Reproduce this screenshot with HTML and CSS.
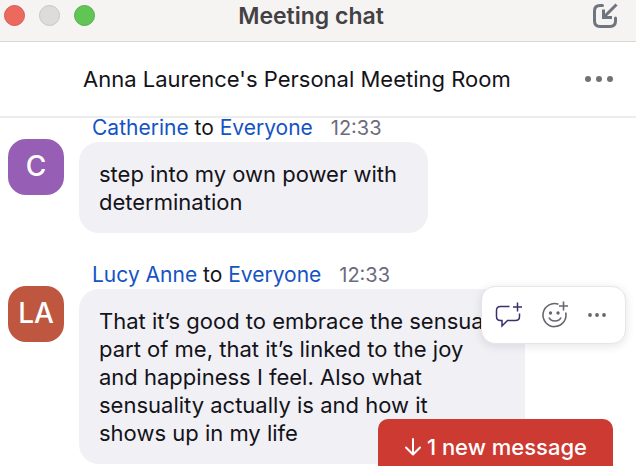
FILE: index.html
```html
<!DOCTYPE html>
<html lang="en">
<head>
  <meta charset="UTF-8">
  <meta name="viewport" content="width=device-width, initial-scale=1.0">
  <title>Meeting chat</title>
  <link rel="stylesheet" href="styles.css">
</head>
<body>
  <div class="window">
    <header class="titlebar">
      <div class="lights">
        <button class="light close" aria-label="Close"></button>
        <button class="light minimize" aria-label="Minimize" disabled></button>
        <button class="light expand" aria-label="Zoom"></button>
      </div>
      <h1>Meeting chat</h1>
      <button class="icon-btn dock" aria-label="Merge to meeting window">
        <svg width="26" height="26" viewBox="0 0 26 26" fill="none" stroke="#6f757e" stroke-width="3">
          <path d="M10.500 2.500H8C4.500 2.500 2.500 4.500 2.500 8v10c0 3.500 2 5.500 5.500 5.500h10c3.500 0 5.500-2 5.500-5.500v-3" stroke-linecap="round"/>
          <path d="M24.500 1.500L12.500 13.500M11.500 6.500v8h8.500"/>
        </svg>
      </button>
    </header>

    <div class="room">
      <h2>Anna Laurence's Personal Meeting Room</h2>
      <button class="icon-btn more" aria-label="More options">
        <svg width="30" height="8" viewBox="0 0 30 8" fill="#717176">
          <circle cx="4" cy="4" r="3"/>
          <circle cx="15" cy="4" r="3"/>
          <circle cx="26" cy="4" r="3"/>
        </svg>
      </button>
    </div>

    <main class="chat">
      <article class="message">
        <div class="avatar purple">C</div>
        <div class="content">
          <div class="meta">
            <a href="#">Catherine</a> to <a href="#">Everyone</a>
            <time>12:33</time>
          </div>
          <p class="bubble">step into my own power with<br>determination</p>
        </div>
      </article>

      <article class="message">
        <div class="avatar rust">LA</div>
        <div class="content">
          <div class="meta">
            <a href="#">Lucy Anne</a> to <a href="#">Everyone</a>
            <time>12:33</time>
          </div>
          <p class="bubble">That it’s good to embrace the sensual part of me, that it’s linked to the joy and happiness I feel. Also what sensuality actually is and how it shows up in my life</p>
        </div>

        <div class="actions">
          <button class="icon-btn" aria-label="Reply">
            <svg width="28" height="28" viewBox="0 0 28 28" fill="none" stroke="#39306f" stroke-width="1.500">
              <path d="M14.500 5.500H5.500Q1.500 5.500 1.500 9.500V15.500Q1.500 19.500 5.500 19.500H7V25L12.500 19.500H20.500Q24.500 19.500 24.500 15.500V12.500"/>
              <path d="M22.500 1.500v9M18 6h9"/>
            </svg>
          </button>
          <button class="icon-btn" aria-label="Add reaction">
            <svg width="28" height="28" viewBox="0 0 28 28" fill="none" stroke="#66666f" stroke-width="1.600">
              <path d="M17.500 3.300A11.500 11.500 0 1 0 24.700 11.500"/>
              <path d="M22.500 0.500v9M18 5h9"/>
              <path d="M8 16.500c2 4.700 10 4.700 12 0"/>
              <circle cx="9.500" cy="12" r="1.700" fill="#66666f" stroke="none"/>
              <circle cx="17" cy="12" r="1.700" fill="#66666f" stroke="none"/>
            </svg>
          </button>
          <button class="icon-btn" aria-label="More actions">
            <svg width="20" height="6" viewBox="0 0 20 6" fill="#66666f">
              <circle cx="3" cy="3" r="1.900"/>
              <circle cx="10" cy="3" r="1.900"/>
              <circle cx="17" cy="3" r="1.900"/>
            </svg>
          </button>
        </div>
      </article>
    </main>

    <button class="new-message">
      <svg width="18" height="20" viewBox="0 0 18 20" fill="none" stroke="#fff" stroke-width="2" stroke-linecap="round" stroke-linejoin="round">
        <path d="M9 2v15M2 10.500L9 17.500L16 10.500"/>
      </svg>
      <span>1 new message</span>
    </button>
  </div>
</body>
</html>
```

FILE: styles.css
```css
* {
  margin: 0;
  padding: 0;
  box-sizing: border-box;
}

body {
  background: #fff;
  color: #131319;
  font-family: Inter, "Liberation Sans", sans-serif;
  font-size: 22px;
  line-height: 28px;
}

button {
  border: none;
  background: none;
  font: inherit;
  cursor: pointer;
}

a {
  color: #1553c4;
  text-decoration: none;
}

.window {
  position: relative;
  height: 100vh;
  display: flex;
  flex-direction: column;
  overflow: hidden;
}

.icon-btn {
  display: flex;
  align-items: center;
  justify-content: center;
}

/* title bar */
.titlebar {
  display: grid;
  grid-template-columns: 1fr auto 1fr;
  align-items: center;
  padding: 0 18px 10px 4px;
  height: 42px;
  flex: none;
  background: #f6f3f3;
  border-bottom: 1px solid #dad7d8;
}

.titlebar h1 {
  color: #434144;
  font-size: 23px;
  font-weight: 600;
}

.lights {
  display: flex;
  gap: 14px;
}

.light {
  width: 21px;
  height: 21px;
  border-radius: 50%;
}

.close {
  background: #ec695e;
  border: 1px solid #d5584e;
}

.minimize {
  background: #dedbdb;
  border: 1px solid #c8c5c5;
}

.expand {
  background: #61c555;
  border: 1px solid #52ae46;
}

.dock {
  justify-self: end;
}

/* room name */
.room {
  display: flex;
  align-items: center;
  justify-content: space-between;
  height: 76px;
  flex: none;
  padding: 0 22px 0 83px;
  border-bottom: 2px solid #ededee;
}

.room h2 {
  font-size: 22px;
  font-weight: 400;
}

/* messages */
.chat {
  flex: 1;
  min-height: 0;
  padding: 0 8px;
}

.message {
  position: relative;
  display: flex;
  gap: 15px;
  margin-bottom: 32px;
}

.avatar {
  width: 56px;
  height: 56px;
  flex: none;
  margin-top: 21px;
  border-radius: 18px;
  color: #fff;
  font-size: 28px;
  font-weight: 500;
  line-height: 54px;
  text-align: center;
}

.purple {
  background: #965fb5;
}

.rust {
  background: #be5640;
}

.meta {
  padding-left: 13px;
  font-size: 21px;
  line-height: 20px;
  margin-bottom: 4px;
}

.meta time {
  margin-left: 12px;
  color: #6b6b7c;
  font-size: 20px;
}

.bubble {
  width: fit-content;
  max-width: 446px;
  padding: 18px 31px 17px 20px;
  border-radius: 20px;
  background: #f1f0f5;
}

.actions {
  position: absolute;
  top: 21px;
  right: 2px;
  display: flex;
  align-items: center;
  gap: 18px;
  padding: 14px 18px 14px 13px;
  border: 1px solid #e6e5ea;
  border-radius: 14px;
  background: #fff;
  box-shadow: 0 2px 10px rgba(40, 40, 60, 0.12);
}

/* jump to newest */
.new-message {
  position: absolute;
  right: 23px;
  bottom: 0;
  display: flex;
  align-items: center;
  gap: 5px;
  padding: 14px 26px 5px;
  border-radius: 10px 10px 0 0;
  background: #cc3a31;
  color: #fff;
  font-weight: 500;
}
```
